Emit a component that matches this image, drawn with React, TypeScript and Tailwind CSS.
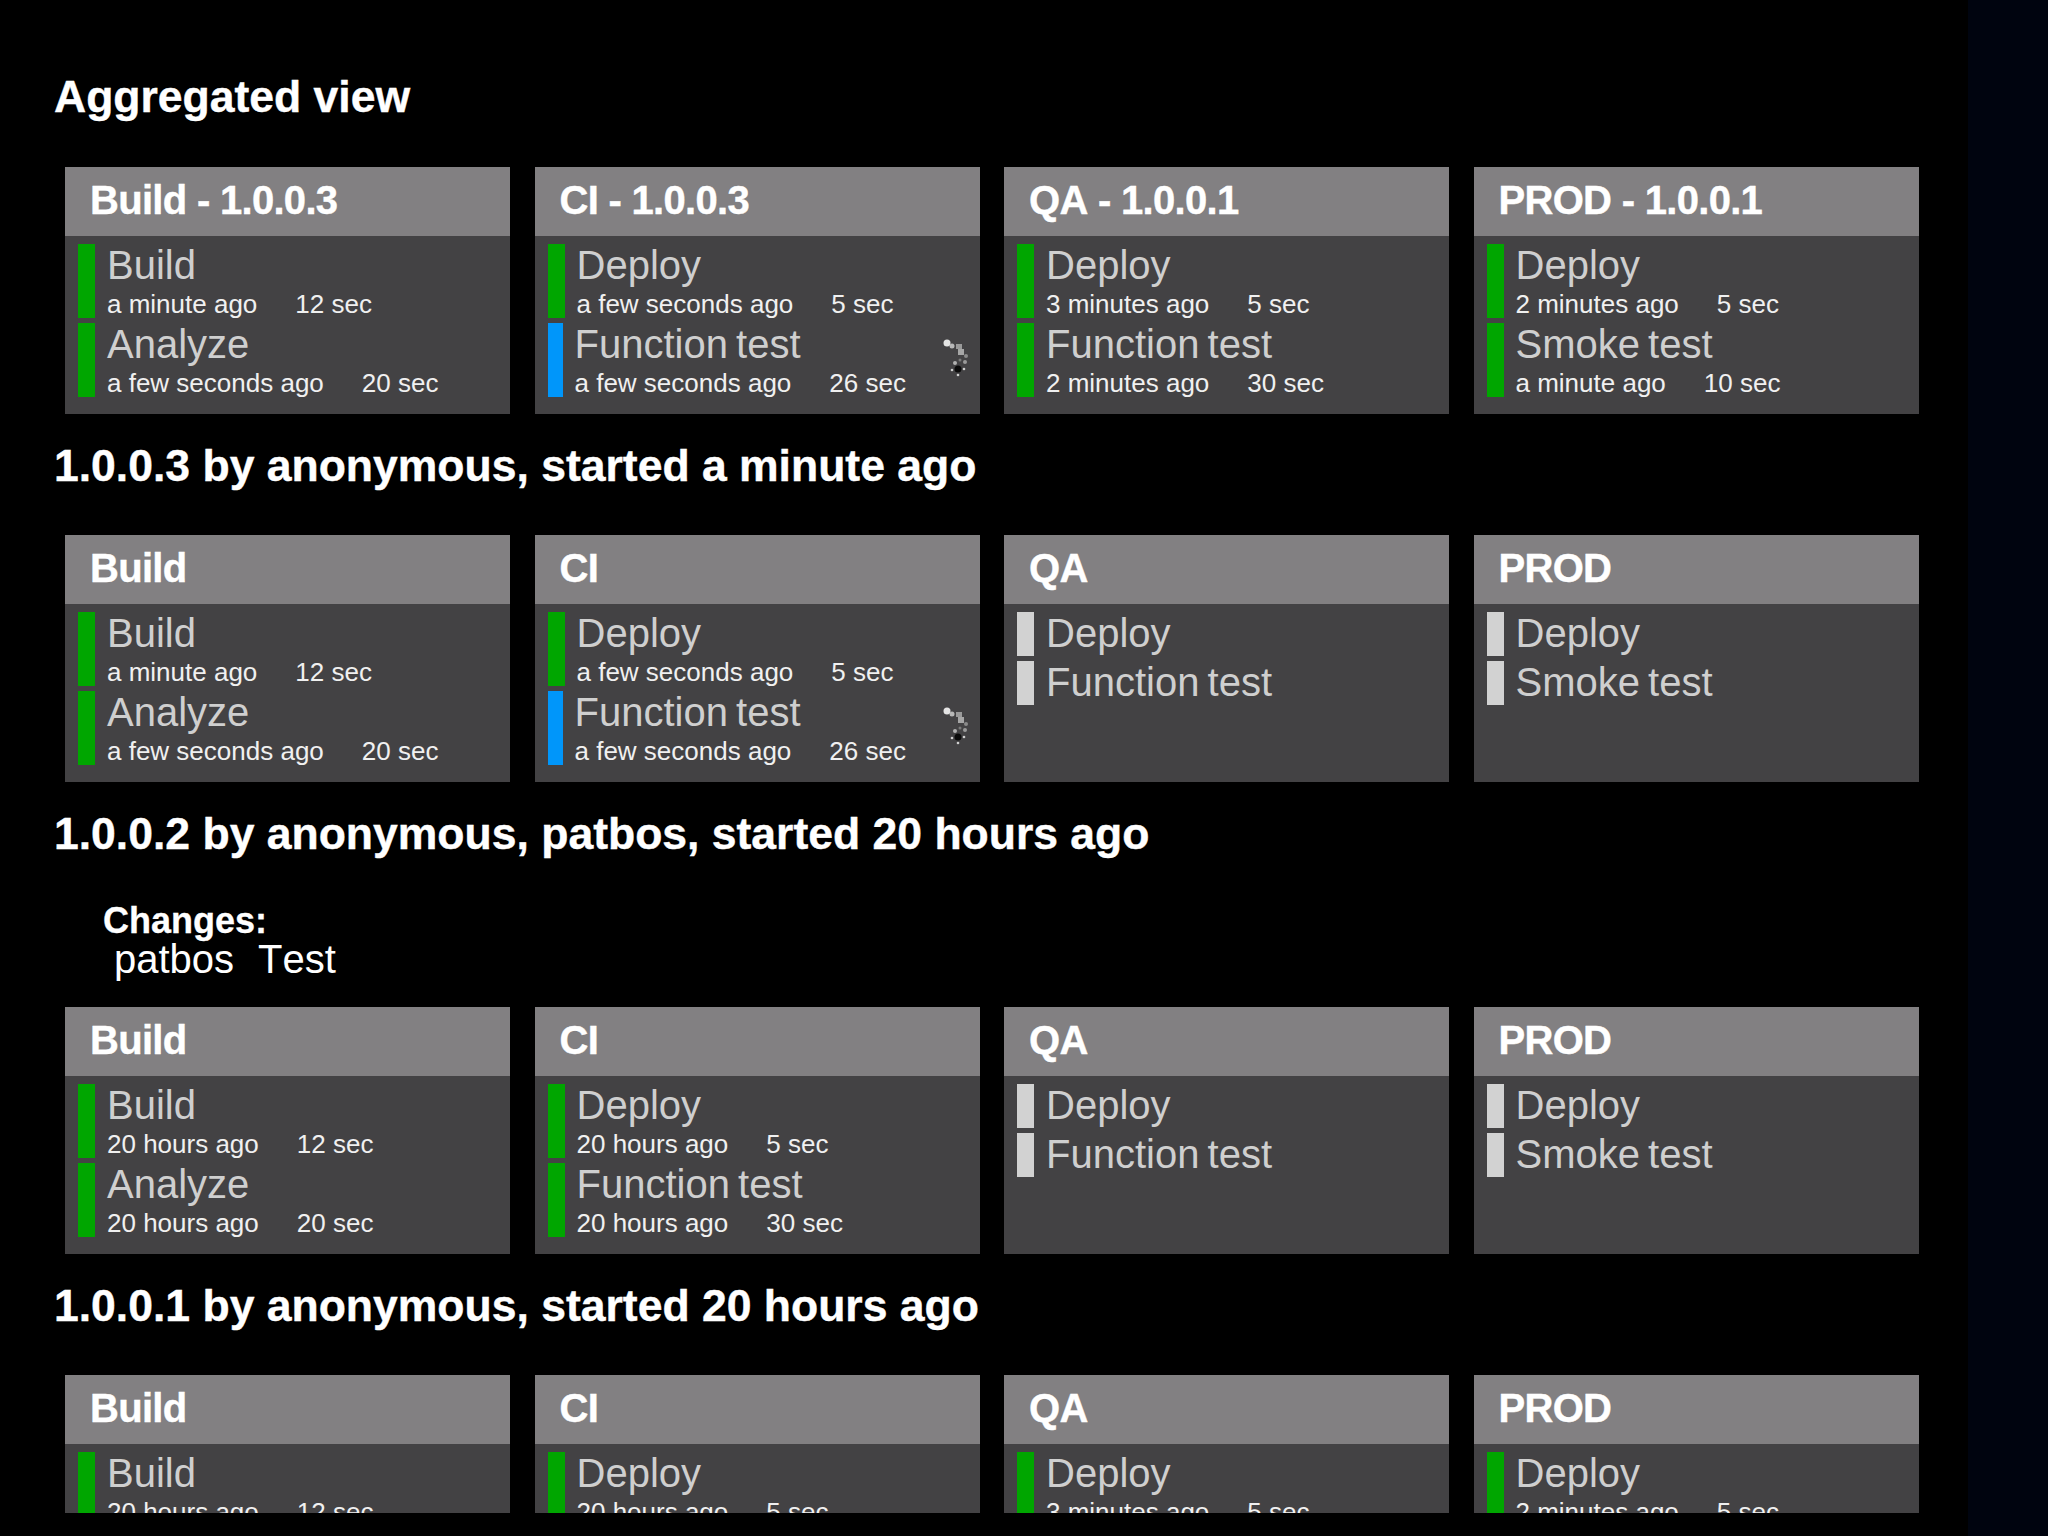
import React from 'react';

type Step = {
  name: string;
  when?: string;
  took?: string;
  status: 'ok' | 'running' | 'idle';
};

type Card = { title: string; steps: Step[] };

const Spinner = () => (
  <svg
    className="absolute right-[11px] bottom-[37px] blur-[0.6px]"
    width="26"
    height="38"
    viewBox="0 0 26 38"
  >
    <circle cx="4" cy="4" r="3.5" fill="#e4e4e4" />
    <circle cx="9" cy="7" r="2.5" fill="#b8b8b8" />
    <rect x="13" y="5" width="6" height="5" fill="#9a9a9a" />
    <rect x="15" y="10" width="6" height="6" fill="#a6a6a6" />
    <circle cx="23" cy="17" r="2" fill="#8a8a8a" />
    <circle cx="22" cy="23" r="2" fill="#9a9a9a" />
    <circle cx="17" cy="21" r="1.5" fill="#7a7a7a" />
    <circle cx="12" cy="24" r="2" fill="#b0b0b0" />
    <circle cx="15" cy="30" r="3.5" fill="#0a0a0a" />
    <circle cx="9" cy="31" r="1.3" fill="#cfcfcf" />
    <circle cx="21" cy="30" r="1.3" fill="#cfcfcf" />
    <circle cx="15" cy="36" r="1.3" fill="#cfcfcf" />
  </svg>
);

const StepRow = ({ step }: { step: Step }) => {
  const running = step.status === 'running';
  const bar =
    step.status === 'ok'
      ? 'bg-[#00a600] w-[17px]'
      : running
      ? 'bg-[#0096fa] w-[15px]'
      : 'bg-[#d2d2d2] w-[17px]';
  return (
    <div className="flex min-h-[44px] mb-[5px]">
      <div className={`${bar} mr-[12px] shrink-0`} />
      <div>
        <div className="text-[40px] leading-[42px] text-[#cfcfcf] [word-spacing:-3px]">
          {step.name}
        </div>
        {step.when && (
          <div className="mt-[3px] mb-[-1px] text-[26px] leading-[30px] text-[#f0f0f0] flex">
            <span className="mr-[38px]">{step.when}</span>
            <span>{step.took}</span>
          </div>
        )}
      </div>
    </div>
  );
};

const StageCard = ({ card }: { card: Card }) => (
  <div className="relative w-[445px] h-[247px] bg-[#434244]">
    <div className="h-[68.5px] bg-[#828082] pl-[25px] text-[40px] leading-[66px] font-bold text-white tracking-[-0.7px] [-webkit-text-stroke:0.4px_white]">
      {card.title}
    </div>
    <div className="pt-2 pl-[13px]">
      {card.steps.map((s) => (
        <StepRow key={s.name} step={s} />
      ))}
    </div>
    {card.steps.some((s) => s.status === 'running') && <Spinner />}
  </div>
);

const Cards = ({ cards }: { cards: Card[] }) => (
  <div className="flex gap-[24.5px] pl-[65px]">
    {cards.map((c) => (
      <StageCard key={c.title} card={c} />
    ))}
  </div>
);

const Heading = ({ children }: { children: React.ReactNode }) => (
  <h2 className="pl-[54px] text-[44.5px] leading-[50px] font-bold text-white [-webkit-text-stroke:0.4px_white]">
    {children}
  </h2>
);

const ok = (name: string, when: string, took: string): Step => ({
  name,
  when,
  took,
  status: 'ok',
});
const idle = (name: string): Step => ({ name, status: 'idle' });

const latest: Card[] = [
  {
    title: 'Build',
    steps: [ok('Build', 'a minute ago', '12 sec'), ok('Analyze', 'a few seconds ago', '20 sec')],
  },
  {
    title: 'CI',
    steps: [
      ok('Deploy', 'a few seconds ago', '5 sec'),
      { name: 'Function test', when: 'a few seconds ago', took: '26 sec', status: 'running' },
    ],
  },
  { title: 'QA', steps: [idle('Deploy'), idle('Function test')] },
  { title: 'PROD', steps: [idle('Deploy'), idle('Smoke test')] },
];

const aggregated: Card[] = [
  { ...latest[0], title: 'Build - 1.0.0.3' },
  { ...latest[1], title: 'CI - 1.0.0.3' },
  {
    title: 'QA - 1.0.0.1',
    steps: [ok('Deploy', '3 minutes ago', '5 sec'), ok('Function test', '2 minutes ago', '30 sec')],
  },
  {
    title: 'PROD - 1.0.0.1',
    steps: [ok('Deploy', '2 minutes ago', '5 sec'), ok('Smoke test', 'a minute ago', '10 sec')],
  },
];

const older: Card[] = [
  {
    title: 'Build',
    steps: [ok('Build', '20 hours ago', '12 sec'), ok('Analyze', '20 hours ago', '20 sec')],
  },
  {
    title: 'CI',
    steps: [ok('Deploy', '20 hours ago', '5 sec'), ok('Function test', '20 hours ago', '30 sec')],
  },
  { title: 'QA', steps: [idle('Deploy'), idle('Function test')] },
  { title: 'PROD', steps: [idle('Deploy'), idle('Smoke test')] },
];

const oldest: Card[] = [
  older[0],
  older[1],
  { title: 'QA', steps: [ok('Deploy', '3 minutes ago', '5 sec')] },
  { title: 'PROD', steps: [ok('Deploy', '2 minutes ago', '5 sec')] },
];

export default function App() {
  return (
    <div className="h-[1536px] flex bg-[#00040f] font-['Liberation_Sans',Arial,sans-serif] [font-kerning:none]">
      <div className="w-[1968px] bg-black">
        <div className="h-[1513px] overflow-hidden pt-[72px]">
          <Heading>Aggregated view</Heading>
          <div className="mt-[45px]">
            <Cards cards={aggregated} />
          </div>
          <div className="mt-[27px]">
            <Heading>1.0.0.3 by anonymous, started a minute ago</Heading>
          </div>
          <div className="mt-[44px]">
            <Cards cards={latest} />
          </div>
          <div className="mt-[27px]">
            <Heading>1.0.0.2 by anonymous, patbos, started 20 hours ago</Heading>
          </div>
          <div className="mt-[43px] pl-[103px] text-white">
            <div className="text-[36px] leading-[38px] font-bold [-webkit-text-stroke:0.3px_white]">Changes:</div>
            <div className="pl-[11px] text-[40px] leading-[38px] flex gap-6">
              <span>patbos</span>
              <span>Test</span>
            </div>
          </div>
          <div className="mt-[29px]">
            <Cards cards={older} />
          </div>
          <div className="mt-[27px]">
            <Heading>1.0.0.1 by anonymous, started 20 hours ago</Heading>
          </div>
          <div className="mt-[44px]">
            <Cards cards={oldest} />
          </div>
        </div>
      </div>
    </div>
  );
}
